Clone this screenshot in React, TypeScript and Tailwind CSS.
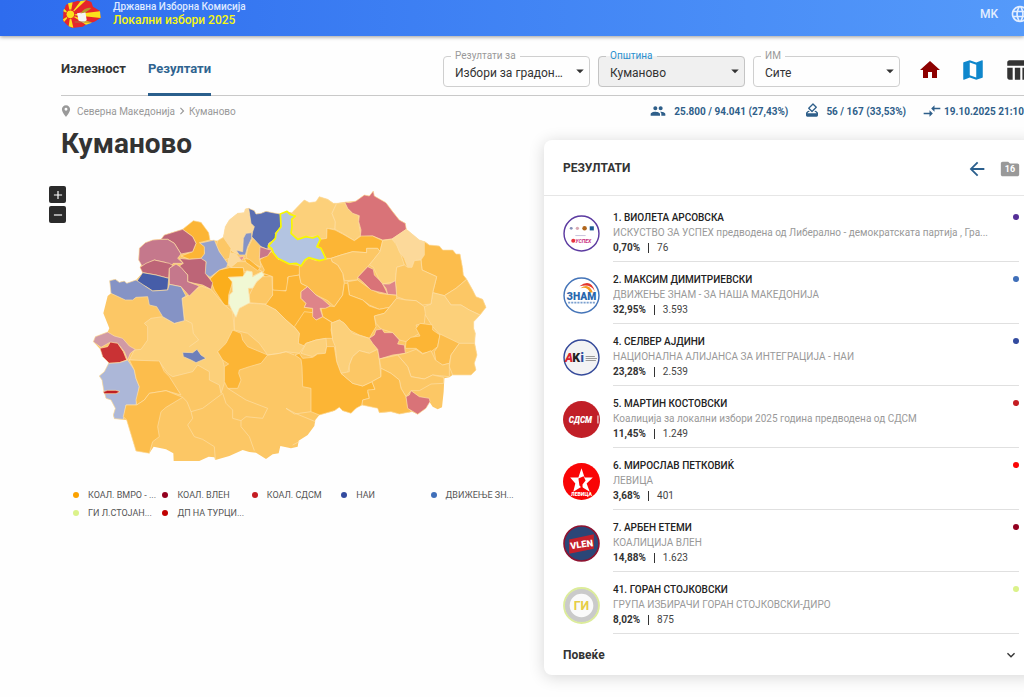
import type { ReactNode } from "react"
import {
  MdAdd,
  MdArrowBack,
  MdArrowDropDown,
  MdChevronRight,
  MdCompareArrows,
  MdExpandMore,
  MdFolder,
  MdHome,
  MdHowToVote,
  MdLanguage,
  MdMap,
  MdPeople,
  MdPlace,
  MdRemove,
  MdTableChart,
} from "react-icons/md"

interface Region {
  fill: string
  points: string
}

const PALE = "#fcd99a"
const LIGHT = "#fcd07a"
const MID = "#fcc765"
const WARM = "#fcbd4c"
const DARK = "#fcb535"

const outline =
  "52,400 65,348 75,340 71,302 88,298 100,307 115,303 122,310 150,300 170,278 162,262 168,250 158,240 160,205 178,188 200,180 225,178 235,165 290,148 322,122 345,127 368,158 372,180 395,182 412,172 418,140 430,120 455,100 475,98 478,87 488,85 505,92 510,102 525,100 540,94 560,98 583,102 603,94 618,98 640,75 655,60 670,68 690,65 700,50 725,58 742,70 752,70 776,66 810,63 835,45 850,48 862,33 865,48 900,68 940,120 958,130 961,148 1000,180 1018,185 1030,195 1060,198 1070,210 1100,210 1110,222 1122,222 1130,265 1132,285 1142,298 1160,330 1170,350 1190,358 1200,382 1182,405 1163,425 1163,445 1168,460 1166,490 1173,525 1165,550 1170,570 1155,585 1100,585 1090,592 1075,595 1073,635 1068,682 1055,688 1040,680 1030,665 1020,685 995,703 978,695 940,702 915,695 880,698 875,685 828,675 810,685 795,700 770,692 760,682 745,692 700,705 688,720 685,738 665,765 638,782 635,800 615,805 583,798 578,820 560,823 540,837 510,818 490,816 470,810 430,828 388,840 385,832 368,830 340,843 263,843 262,820 240,808 203,800 190,820 150,813 122,720 85,716 82,705 88,685 75,660 60,655 53,630 48,600 40,588 55,575 68,550 45,510 22,485 28,470 65,456 70,445"

const regions: Region[] = [
  { fill: PALE, points: "412,172 418,140 430,120 455,100 475,98 478,87 488,85 495,130 505,140 500,155 480,160 470,190 470,210 455,222 440,215 425,200" },
  { fill: PALE, points: "430,218 450,222 465,240 450,250 435,262 425,255" },
  { fill: MID, points: "395,182 412,172 435,205 430,235 415,240 400,215 390,200" },
  { fill: DARK, points: "520,240 557,215 580,240 575,235 610,252 645,258 640,285 605,292 607,330 575,335 560,330 558,290 530,280 535,270" },
  { fill: DARK, points: "530,280 560,290 560,330 600,333 607,290 640,285 645,310 665,320 645,335 645,355 660,370 655,382 680,385 680,410 640,435 628,445 600,420 570,390 535,372 560,345" },
  { fill: LIGHT, points: "618,98 640,75 655,60 670,68 690,65 700,50 725,58 742,70 752,70 738,100 748,125 747,148 723,145 722,175 703,178 695,168 660,170 635,178 615,160 617,118 628,108" },
  { fill: LIGHT, points: "752,70 776,68 790,90 818,107 820,140 825,165 805,182 770,160 747,148 748,125 738,100" },
  { fill: "#d97378", points: "776,66 790,68 810,63 835,45 850,48 862,33 865,48 900,68 920,95 940,120 958,130 961,148 918,177 890,180 860,168 823,170 825,150 818,125 820,107 800,100 785,85" },
  { fill: DARK, points: "723,145 747,150 770,162 805,182 825,168 860,168 890,182 882,215 875,205 842,205 842,218 800,215 765,225 735,235 720,235 705,205 693,200 703,178 722,175" },
  { fill: MID, points: "735,235 765,225 800,215 842,218 842,205 875,205 882,215 862,240 845,260 815,292 815,300 775,302 770,280 755,255 738,245" },
  { fill: LIGHT, points: "890,182 918,177 935,200 945,225 955,255 932,262 928,305 890,312 880,300 862,262 850,255 862,240 882,215" },
  { fill: PALE, points: "918,177 961,148 1000,180 1015,185 1015,225 1003,240 985,242 978,262 965,262 955,235 940,215 930,190" },
  { fill: WARM, points: "1015,185 1030,195 1060,198 1070,210 1100,210 1110,222 1122,222 1130,265 1132,285 1142,298 1110,325 1075,347 1040,338 1052,290 1008,270 1005,240 1015,225" },
  { fill: MID, points: "1142,298 1160,330 1170,350 1190,358 1200,382 1182,405 1150,390 1125,375 1095,375 1075,347 1110,325" },
  { fill: LIGHT, points: "1040,338 1075,347 1095,375 1125,375 1150,390 1182,405 1163,425 1163,445 1168,460 1166,490 1110,490 1060,462 1040,440 1015,400 1015,380 1035,372" },
  { fill: MID, points: "932,262 955,255 965,262 978,262 985,242 1005,240 1008,270 1052,290 1040,338 1035,372 1010,375 990,362 960,360 932,350 928,305" },
  { fill: WARM, points: "640,260 668,233 690,242 735,235 738,245 755,255 770,280 775,310 770,345 745,380 725,362 690,345 665,320 645,310 640,285" },
  { fill: WARM, points: "785,305 815,300 850,325 880,340 905,343 932,345 932,355 910,382 880,388 850,375 830,360 790,345" },
  { fill: DARK, points: "775,310 785,310 790,345 830,360 850,378 880,388 910,382 895,400 865,408 870,440 850,475 820,465 790,450 775,430 760,420 740,428 710,410 705,385 733,378 745,380 770,345" },
  { fill: MID, points: "910,382 932,355 960,360 990,362 1015,380 1018,400 1015,430 990,435 1000,460 960,485 940,480 920,458 885,447 870,430 865,408 895,400" },
  { fill: "#d97378", points: "815,292 845,260 862,268 865,285 880,300 890,312 905,342 875,335 855,330 835,310" },
  { fill: "#de8489", points: "890,312 910,312 928,302 932,345 905,343 900,325" },
  { fill: DARK, points: "625,440 655,395 680,398 690,420 710,410 738,428 735,450 740,475 720,475 690,480 660,490 650,500 635,490 640,460" },
  { fill: "#de8489", points: "645,335 665,320 690,345 710,358 733,378 718,385 702,385 710,410 690,420 680,410 680,385 655,382 660,370 645,355" },
  { fill: LIGHT, points: "735,430 760,420 775,430 800,460 850,475 865,490 875,508 850,520 820,512 800,530 790,555 785,580 765,580 752,545 748,500 740,480" },
  { fill: LIGHT, points: "645,520 660,490 690,480 720,475 722,500 718,520 695,520 680,530" },
  { fill: DARK, points: "627,525 640,520 650,535 680,532 695,522 718,520 722,500 745,500 752,545 765,580 800,610 830,618 858,605 867,628 845,635 850,655 830,660 828,675 810,685 795,700 770,692 760,682 745,692 700,705 675,695 675,625 650,620 648,560 645,538" },
  { fill: MID, points: "800,610 765,580 790,575 790,555 800,530 820,512 850,520 875,508 880,540 885,590 858,605 830,618" },
  { fill: DARK, points: "960,485 975,472 1002,468 990,445 1002,430 1040,435 1040,450 1062,465 1055,500 1035,515 1010,520 990,505 958,505" },
  { fill: "#d97378", points: "850,475 865,465 870,450 888,447 895,458 920,458 940,480 935,492 955,495 958,520 920,525 880,537 875,508 860,490" },
  { fill: WARM, points: "1062,462 1120,490 1095,525 1090,550 1070,555 1050,545 1045,515 1055,500" },
  { fill: MID, points: "1120,490 1166,490 1173,525 1165,550 1170,570 1155,585 1100,585 1090,560 1095,525" },
  { fill: MID, points: "935,525 958,520 990,508 1010,522 1035,512 1048,540 1070,555 1090,550 1090,590 1040,585 1015,597 975,590 965,560" },
  { fill: MID, points: "880,537 935,525 965,560 975,590 1015,597 1040,585 1073,592 1073,610 1035,612 1000,632 975,632 960,650 945,625 940,600 915,580 885,565" },
  { fill: WARM, points: "885,565 915,580 940,600 945,625 960,650 968,685 978,695 940,702 915,695 880,698 875,685 828,675 830,660 850,655 845,630 867,628 858,605 885,590" },
  { fill: "#d97378", points: "975,632 1000,650 1030,655 1032,665 1020,685 995,703 965,685 960,650 970,645" },
  { fill: LIGHT, points: "445,400 460,385 485,370 535,372 570,390 600,420 628,445 640,460 637,490 655,498 640,520 600,515 580,520 545,525 520,490 485,460 445,450" },
  { fill: MID, points: "500,325 512,305 530,290 558,290 560,345 540,372 490,368 490,345" },
  { fill: "#fbae1c", points: "372,297 400,270 430,263 472,263 475,290 427,292 440,305 428,345 427,378 415,375 385,330" },
  { fill: MID, points: "435,262 455,245 480,245 505,262 530,275 500,288 498,275 475,275 472,263" },
  { fill: MID, points: "480,232 485,205 500,175 515,185 525,200 520,230 525,262 500,250" },
  { fill: DARK, points: "475,235 490,238 522,265 515,272 480,247" },
  { fill: "#f1f8d4", points: "427,292 470,290 482,272 498,275 500,290 527,275 535,285 512,305 500,325 487,325 492,368 460,385 450,412 440,395 428,370 430,345 440,335 438,305" },
  { fill: LIGHT, points: "265,430 295,422 290,375 288,355 300,350 345,318 375,328 415,375 440,395 445,450 430,490 395,515 410,540 415,560 415,610 405,640 400,615 370,600 370,575 335,555 320,575 260,590 245,580 220,545 130,540 145,510 165,508 185,480 185,440 175,430 195,415 230,410" },
  { fill: DARK, points: "395,515 420,490 430,470 440,450 465,460 470,480 485,500 545,525 525,550 490,560 460,570 458,580 465,600 455,625 425,625 415,605 415,560 428,552 410,540" },
  { fill: "#5b6fb2", points: "488,85 505,92 510,102 525,100 540,94 560,98 583,102 585,140 568,160 570,175 548,190 545,208 525,200 497,170 500,155 505,140 495,130" },
  { fill: "#8593c5", points: "480,160 497,158 497,175 485,200 478,225 460,225 450,210 470,215 472,175" },
  { fill: "#c9778a", points: "522,200 545,208 557,210 545,228 520,237" },
  { fill: "#e08d95", points: "458,232 475,228 468,242" },
  { fill: "#96a2cd", points: "340,190 385,180 400,215 425,250 422,262 400,270 372,292 355,280 360,245 340,235 355,220 352,200" },
  { fill: DARK, points: "290,148 322,122 345,127 368,158 372,180 340,188 355,200 355,222 345,235 310,238 285,228 320,215 330,190 320,170" },
  { fill: "#bd6577", points: "235,165 290,148 320,170 330,190 320,215 285,222 265,190 245,178 225,178" },
  { fill: "#c5788c", points: "158,240 160,205 178,188 200,180 225,178 245,178 265,190 285,222 275,235 292,250 262,250 250,262 240,248 205,240 168,258" },
  { fill: "#bd6577", points: "162,262 180,250 205,240 250,250 262,258 250,265 248,295 210,285 170,278" },
  { fill: "#bd6577", points: "280,235 310,238 345,235 360,245 358,280 380,308 375,328 350,315 325,310 305,305 305,285 280,258 292,250" },
  { fill: "#c5788c", points: "250,265 270,252 285,262 305,285 305,305 340,318 310,348 285,320 250,313" },
  { fill: "#465da8", points: "170,278 210,285 248,295 245,330 200,333 180,320 150,308" },
  { fill: "#8593c5", points: "71,302 88,298 100,307 115,303 122,310 150,300 180,320 200,333 245,330 250,313 285,320 300,348 288,355 295,422 265,430 230,410 212,380 190,375 185,350 150,352 140,360 118,360 75,340" },
  { fill: "#6f80ba", points: "290,517 320,518 333,508 345,525 360,535 330,548 315,540 292,530" },
  { fill: "#d19aa5", points: "22,485 28,470 65,456 85,468 110,475 130,498 148,508 133,520 125,540 115,515 95,490 70,488 45,502 28,490" },
  { fill: "#c93234", points: "42,505 65,500 73,486 95,490 112,515 122,540 100,548 70,550 50,530" },
  { fill: "#acb7d8", points: "68,550 100,548 125,540 145,570 150,595 160,620 150,675 120,675 112,718 85,716 82,705 88,685 75,660 60,655 53,630 48,600 40,588 55,575" },
  { fill: "#bf1f24", points: "52,635 65,631 90,631 102,635 90,641 55,641" },
  { fill: WARM, points: "130,540 220,543 235,575 250,590 285,645 240,632 190,640 175,660 152,675 150,660 160,620 150,595 145,570" },
  { fill: WARM, points: "120,675 152,675 175,660 190,640 240,632 290,652 240,682 225,695 215,740 220,770 200,785 190,820 150,813 122,720 112,710" },
]

const borders = [
  "298,420 318,430 322,460 338,480 310,500",
  "290,652 303,665 315,695 350,685 410,640",
  "315,695 320,715 305,735 325,770 350,778 385,800 388,840",
  "410,640 420,670 440,690 440,715 465,722 465,740 490,770 505,812",
  "465,722 480,710 530,715 545,685 480,660 425,625",
  "620,795 640,785",
  "675,695 625,702 600,685 628,700 688,725",
  "545,525 580,520 600,515 625,525",
]

function MunicipalityMap() {
  return (
    <svg viewBox="0 0 1230 870" className="h-[290px] w-[410px]" role="img" aria-label="Мапа на општини">
      <polygon points={outline} fill={MID} />
      <g stroke="#fde0a8" strokeWidth="2" strokeLinejoin="round">
        {regions.map((region) => (
          <polygon key={region.points} points={region.points} fill={region.fill} />
        ))}
        {borders.map((points) => (
          <polyline key={points} points={points} fill="none" />
        ))}
      </g>
      <polygon
        points="583,102 603,94 612,103 628,108 617,118 618,140 615,160 635,178 660,170 680,174 695,168 703,178 693,200 705,205 720,237 700,242 668,233 657,240 645,258 630,250 610,252 575,235 562,218 557,205 547,198 568,175 570,160 585,140"
        fill="#b3c4e1"
        stroke="#f8f800"
        strokeWidth="5"
        strokeLinejoin="round"
      />
    </svg>
  )
}

function StateLogo() {
  return (
    <svg viewBox="0 0 117 84" className="h-7 w-[39px]" aria-hidden="true">
      <path
        d="M3 62 L4 35 L12 14 L28 8 L48 2 L58 6 L72 0 L88 6 L93 20 L113 32 L116 54 L96 66 L78 70 L62 80 L30 84 L16 76 Z"
        fill="#e5262b"
      />
      <path
        d="M25 44 L4 34 L6 26 Z M25 44 L18 10 L32 7 Z M25 44 L56 3 L72 1 Z M25 44 L114 34 L116 54 Z M25 44 L90 68 L72 74 Z M25 44 L34 83 L20 79 Z M25 44 L3 58 L6 66 Z"
        fill="#fbe11c"
      />
      <circle cx="25" cy="43" r="13" fill="#fbe11c" stroke="#e5262b" strokeWidth="3" />
      <path d="M45 40 L70 36 L74 60 L65 68 L50 62 Z" fill="#f4f4f4" />
      <path d="M38 66 H86" stroke="#a9773a" strokeWidth="3" />
      <path d="M55 42 Q68 20 88 24 Q74 38 58 40 Z" fill="#b59b2c" />
    </svg>
  )
}

const successLogo = (
  <>
    <circle cx="18" cy="18" r="17" fill="#fff" stroke="#5b3aa0" strokeWidth="1.4" />
    <circle cx="8" cy="13" r="1.4" fill="#8791b8" />
    <circle cx="14" cy="13" r="1.6" fill="#d9a9b4" />
    <circle cx="21" cy="13" r="2.2" fill="#b0661c" />
    <rect x="26" y="11" width="4" height="4" fill="#1d5c93" />
    <path d="M12 20 H22" stroke="#c9c4dd" strokeWidth="1" />
    <circle cx="10" cy="25" r="2" fill="#e8343f" />
    <text x="12" y="27" fontSize="5" fontWeight="700" fontStyle="italic" fill="#c92c80">УСПЕХ</text>
  </>
)

const znamLogo = (
  <>
    <circle cx="18" cy="18" r="17" fill="#fff" stroke="#4474b8" strokeWidth="1.4" />
    <path d="M16 9 Q27 1 31 14 Q27 6 16 9" fill="#e2382d" />
    <path d="M17 11 Q25 5 29 15 L26 15 Q24 9 17 11" fill="#f49a20" />
    <text x="18" y="22" fontSize="10" fontWeight="900" textAnchor="middle" fill="#2866ad">ЗНАМ</text>
    <path d="M5 25 H31" stroke="#7ba0cf" strokeWidth="1.6" strokeDasharray="2 1" />
  </>
)

const akiLogo = (
  <>
    <circle cx="18" cy="18" r="17" fill="#f3f3f4" stroke="#34499a" strokeWidth="1.4" />
    <text y="22" fontSize="12" fontWeight="900">
      <tspan x="2" fill="#d9232e" fontStyle="italic">A</tspan>
      <tspan x="9" fill="#222">K</tspan>
      <tspan x="17" fill="#2b4a9b">i</tspan>
    </text>
    <path d="M22 17 H31 M22 19 H33 M22 21 H32" stroke="#999" strokeWidth="1" />
  </>
)

const sdsmLogo = (
  <>
    <circle cx="18" cy="18" r="18" fill="#c11f27" />
    <text x="17" y="21" fontSize="8" fontWeight="900" fontStyle="italic" textAnchor="middle" fill="#fff">СДСМ</text>
    <path d="M34 14 V22" stroke="#fff" strokeWidth="1" />
  </>
)

const levicaLogo = (
  <>
    <circle cx="18" cy="18" r="18" fill="#f90506" />
    <path d="M18 5 L21 14 L29 14 L23 20 L26 28 L18 23 L10 28 L12 20 L7 14 L15 14 Z" fill="#fff" />
    <path d="M15 15 L20 13 L22 17 L19 21 L19 25 L16 22 Z" fill="#f90506" />
    <text x="18" y="32" fontSize="5" fontWeight="900" textAnchor="middle" fill="#fff">ЛЕВИЦА</text>
  </>
)

const vlenLogo = (
  <>
    <circle cx="18" cy="18" r="17" fill="#2b4677" stroke="#8e1230" strokeWidth="1.6" />
    <path d="M6 14 L30 9 V23 L6 28 Z" fill="#c5202b" />
    <text x="18" y="22" fontSize="9" fontWeight="900" textAnchor="middle" fill="#fff" transform="rotate(-8 18 18)">VLEN</text>
  </>
)

const giLogo = (
  <>
    <circle cx="18" cy="18" r="14" fill="#fafafa" stroke="#cacaca" strokeWidth="5" />
    <circle cx="18" cy="18" r="17" fill="none" stroke="#dcec9a" strokeWidth="1.8" />
    <text x="18" y="22" fontSize="12" fontWeight="700" textAnchor="middle" fill="#e6cd45">ГИ</text>
  </>
)

interface Candidate {
  name: string
  party: string
  percent: string
  votes: string
  color: string
  logo: ReactNode
}

const candidates: Candidate[] = [
  { name: "1. ВИОЛЕТА АРСОВСКА", party: "ИСКУСТВО ЗА УСПЕХ предводена од Либерално - демократската партија , Гра...", percent: "0,70%", votes: "76", color: "#552f97", logo: successLogo },
  { name: "2. МАКСИМ ДИМИТРИЕВСКИ", party: "ДВИЖЕЊЕ ЗНАМ - ЗА НАША МАКЕДОНИЈА", percent: "32,95%", votes: "3.593", color: "#3f6fb9", logo: znamLogo },
  { name: "4. СЕЛВЕР АЈДИНИ", party: "НАЦИОНАЛНА АЛИЈАНСА ЗА ИНТЕГРАЦИЈА - НАИ", percent: "23,28%", votes: "2.539", color: "#334b9f", logo: akiLogo },
  { name: "5. МАРТИН КОСТОВСКИ", party: "Коалиција за локални избори 2025 година предводена од СДСМ", percent: "11,45%", votes: "1.249", color: "#c41c22", logo: sdsmLogo },
  { name: "6. МИРОСЛАВ ПЕТКОВИЌ", party: "ЛЕВИЦА", percent: "3,68%", votes: "401", color: "#fb0505", logo: levicaLogo },
  { name: "7. АРБЕН ЕТЕМИ", party: "КОАЛИЦИЈА ВЛЕН", percent: "14,88%", votes: "1.623", color: "#93001f", logo: vlenLogo },
  { name: "41. ГОРАН СТОЈКОВСКИ", party: "ГРУПА ИЗБИРАЧИ ГОРАН СТОЈКОВСКИ-ДИРО", percent: "8,02%", votes: "875", color: "#dbf28a", logo: giLogo },
]

const legend = [
  { label: "КОАЛ. ВМРО - ...", color: "#fba200" },
  { label: "КОАЛ. ВЛЕН", color: "#93001f" },
  { label: "КОАЛ. СДСМ", color: "#c41c22" },
  { label: "НАИ", color: "#334b9f" },
  { label: "ДВИЖЕЊЕ ЗН...", color: "#3f6fb9" },
  { label: "ГИ Л.СТОЈАН...", color: "#dbf28a" },
  { label: "ДП НА ТУРЦИ...", color: "#c00000" },
]

interface FilterProps {
  id: string
  label: string
  value: string
  active?: boolean
}

function Filter({ id, label, value, active }: FilterProps) {
  return (
    <fieldset
      className={`relative h-[37px] w-[147px] min-w-0 rounded border px-[7px] ${
        active ? "border-[#c4c4c4] bg-[#f0f0f0]" : "border-[#cfcfcf]"
      }`}
    >
      <legend className={`px-1 text-[10px] leading-3 ${active ? "text-[#2a8fce]" : "text-[#999]"}`}>
        <label htmlFor={id}>{label}</label>
      </legend>
      <select
        id={id}
        className="block h-[22px] w-full appearance-none truncate bg-transparent pr-4 pl-1 text-xs text-[#333] outline-none"
      >
        <option>{value}</option>
      </select>
      <MdArrowDropDown className="pointer-events-none absolute right-0 bottom-1.5 size-[18px] text-[#333]" />
    </fieldset>
  )
}

function CandidateRow({ candidate }: { candidate: Candidate }) {
  return (
    <li className="flex h-[62px] gap-[13px]">
      <svg viewBox="0 0 36 36" className="mt-[15px] size-[37px] shrink-0" aria-hidden="true">
        {candidate.logo}
      </svg>
      <div className="flex min-w-0 flex-1 justify-between border-b border-[#e0e0e0] pt-2.5">
        <div className="min-w-0 pr-2">
          <p className="text-[10px] leading-[15px] font-medium text-[#222]">{candidate.name}</p>
          <p className="truncate text-[10px] leading-[15px] text-[#999]">{candidate.party}</p>
          <p className="flex items-center text-[10px] leading-[15px] text-[#444]">
            <b className="text-[#333]">{candidate.percent}</b>
            <span className="mx-2 h-2.5 w-px bg-[#333]" />
            {candidate.votes}
          </p>
        </div>
        <span className="mt-1 size-1.5 shrink-0 rounded-full" style={{ backgroundColor: candidate.color }} />
      </div>
    </li>
  )
}

export default function App() {
  return (
    <div className="relative min-h-screen overflow-hidden bg-[#fefefe] font-['Roboto','Open_Sans',sans-serif] text-[#333]">
      <header className="relative flex h-9 items-start bg-linear-to-r from-[#2e6cee] to-[#559afa] pl-[62px] shadow-[0_1px_4px_rgba(0,0,0,0.4)]">
        <StateLogo />
        <div className="ml-3 text-white">
          <p className="text-[10px] leading-[13px] font-medium text-[#dfe9ff]">Државна Изборна Комисија</p>
          <p className="text-xs leading-[14px] font-medium text-[#f7f711]">Локални избори 2025</p>
        </div>
        <button type="button" className="-mr-1.5 ml-auto flex h-7 shrink-0 items-center gap-3 text-xs font-medium text-[#e3eeff]">
          MK
          <MdLanguage className="size-5" />
        </button>
      </header>

      <main className="-mr-3 pl-[61px]">
        <div className="flex h-[60px] justify-between border-b border-[#c9c9c9]">
          <nav className="flex gap-[22px] text-[13px] font-bold">
            <a href="#izleznost" className="flex h-[60px] items-center pt-1.5">
              Излезност
            </a>
            <a href="#rezultati" className="flex h-[60px] items-center border-b-3 border-[#2a5f8d] pt-2 text-[#2f6490]">
              Резултати
            </a>
          </nav>
          <div className="flex shrink-0 items-center gap-[18px] pr-1.5">
            <div className="flex gap-2 pt-1.5">
              <Filter id="race" label="Резултати за" value="Избори за градоначалник" />
              <Filter id="municipality" label="Општина" value="Куманово" active />
              <Filter id="station" label="ИМ" value="Сите" />
            </div>
            <a href="#home" aria-label="Почетна" className="pt-2 text-[#8c0000]">
              <MdHome className="size-6" />
            </a>
            <a href="#map" aria-label="Мапа" className="pt-2 text-[#0f87cc]">
              <MdMap className="size-[26px]" />
            </a>
            <a href="#table" aria-label="Табела" className="pt-2">
              <MdTableChart className="size-[26px]" />
            </a>
          </div>
        </div>

        <div className="flex h-7 items-center justify-between pt-0.5 text-[10px]">
          <div className="flex items-center text-[#999]">
            <MdPlace className="-ml-0.5 size-3.5" />
            <a href="#region" className="ml-1">
              Северна Македонија
            </a>
            <MdChevronRight className="size-3.5" />
            <span>Куманово</span>
          </div>
          <div className="flex shrink-0 items-center gap-4 pr-3 font-bold text-[#2f5f8a]">
            <span className="flex items-center gap-2">
              <MdPeople className="size-4" />
              25.800 / 94.041 (27,43%)
            </span>
            <span className="flex items-center gap-1.5">
              <MdHowToVote className="-mt-0.5 size-4" />
              56 / 167 (33,53%)
            </span>
            <span className="flex items-center gap-0.5">
              <MdCompareArrows className="size-5" />
              19.10.2025 21:10
            </span>
          </div>
        </div>

        <div className="grid grid-cols-[483fr_492fr]">
          <section className="min-w-0">
            <h1 className="pt-0.5 text-[28px] leading-9 font-bold">Куманово</h1>
            <div className="mt-[18px] -ml-3 flex gap-5">
              <div className="flex flex-col gap-[3px] pt-1.5">
                <button type="button" aria-label="Зголеми" className="flex size-[17px] items-center justify-center rounded-xs bg-[#2b2b2b] text-white">
                  <MdAdd className="size-3.5" />
                </button>
                <button type="button" aria-label="Намали" className="flex size-[17px] items-center justify-center rounded-xs bg-[#2b2b2b] text-white">
                  <MdRemove className="size-3.5" />
                </button>
              </div>
              <MunicipalityMap />
            </div>
            <ul className="mt-4 ml-3 grid grid-cols-5 pr-6 text-[9px] leading-[18px] text-[#555]">
              {legend.map((item) => (
                <li key={item.label} className="flex items-center gap-[9px] whitespace-nowrap">
                  <span className="size-1.5 shrink-0 rounded-full" style={{ backgroundColor: item.color }} />
                  {item.label}
                </li>
              ))}
            </ul>
          </section>

          <section className="mt-4 min-w-0 rounded-lg bg-white pr-[17px] pl-[19px] shadow-[0_2px_16px_rgba(0,0,0,0.16)]">
            <div className="-mr-[17px] -ml-[19px] flex h-14 items-center justify-between border-b border-[#e6e6e6] pr-4 pl-[19px]">
              <h2 className="text-xs font-bold">РЕЗУЛТАТИ</h2>
              <div className="flex items-center gap-3 pt-0.5">
                <button type="button" aria-label="Назад" className="text-[#2a5f8d]">
                  <MdArrowBack className="size-[22px]" />
                </button>
                <span className="relative flex size-5 items-center justify-center">
                  <MdFolder className="absolute size-[22px] text-[#999]" />
                  <span className="relative pt-px text-[9px] leading-none font-bold text-white">16</span>
                </span>
              </div>
            </div>
            <ul className="pt-1">
              {candidates.map((candidate) => (
                <CandidateRow key={candidate.name} candidate={candidate} />
              ))}
            </ul>
            <button type="button" className="flex h-[41px] w-full items-center justify-between text-xs font-bold">
              Повеќе
              <MdExpandMore className="size-4" />
            </button>
          </section>
        </div>
      </main>
    </div>
  )
}
